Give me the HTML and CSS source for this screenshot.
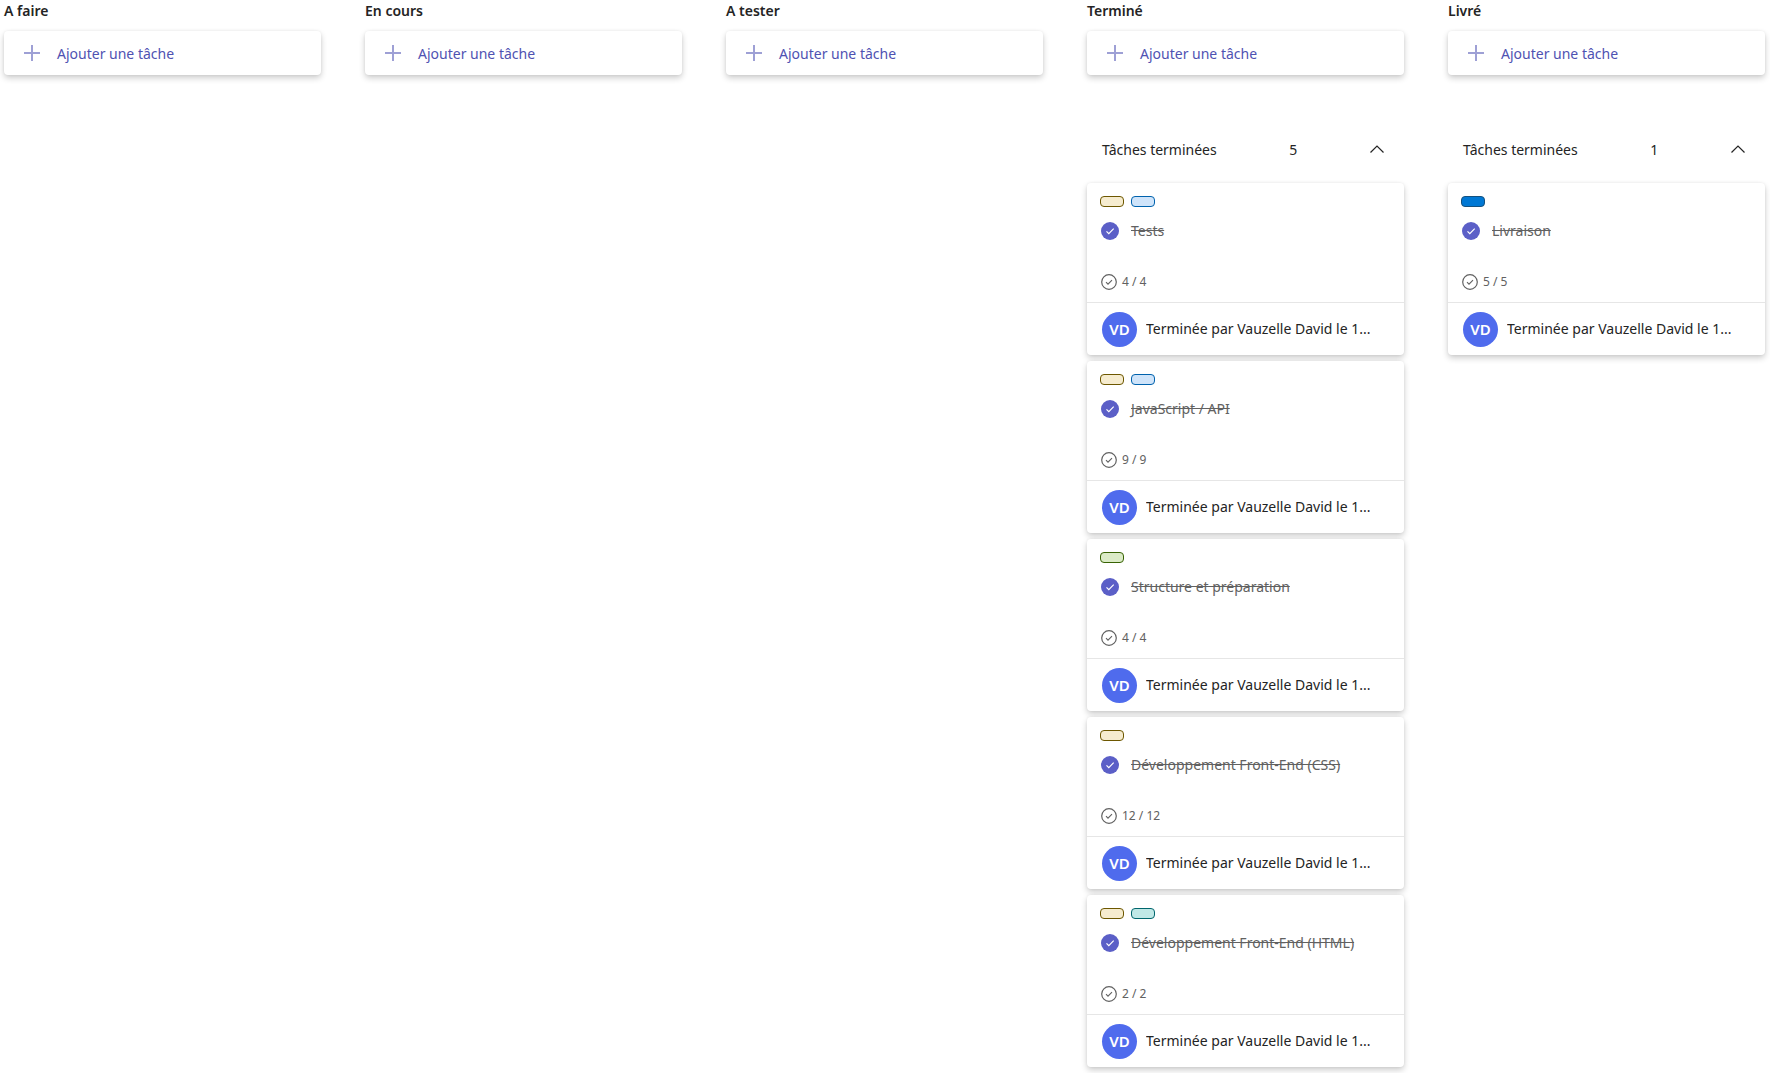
FILE: index.html
```html
<!DOCTYPE html>
<html lang="fr">
<head>
<meta charset="utf-8">
<title>Tableau des tâches</title>
<link rel="stylesheet" href="styles.css">
</head>
<body>
<svg class="sprite" aria-hidden="true">
  <symbol id="plus" viewBox="0 0 16 16"><path d="M8 0v16M0 8h16" fill="none" stroke="currentColor" stroke-width="2" stroke-opacity=".55"/></symbol>
  <symbol id="chevron" viewBox="0 0 14 8"><path d="M.5 7.5 7 1l6.500 6.500" fill="none" stroke="currentColor" stroke-width="1.200"/></symbol>
  <symbol id="tick" viewBox="0 0 18 18"><path d="m5.500 9.300 2.300 2.300 4.900-4.900" fill="none" stroke="#fff" stroke-width="1.200"/></symbol>
  <symbol id="progress" viewBox="0 0 16 16"><circle cx="8" cy="8" r="7.300" fill="none" stroke="currentColor" stroke-width="1.200"/><path d="m5 8.200 2 2 4-4" fill="none" stroke="currentColor" stroke-width="1.100"/></symbol>
</svg>
<main class="board">
  <section class="column">
    <h2 class="column-title">A faire</h2>
    <button class="add" type="button"><svg class="plus"><use href="#plus"/></svg>Ajouter une tâche</button>
  </section>
  <section class="column">
    <h2 class="column-title">En cours</h2>
    <button class="add" type="button"><svg class="plus"><use href="#plus"/></svg>Ajouter une tâche</button>
  </section>
  <section class="column">
    <h2 class="column-title">A tester</h2>
    <button class="add" type="button"><svg class="plus"><use href="#plus"/></svg>Ajouter une tâche</button>
  </section>
  <section class="column">
    <h2 class="column-title">Terminé</h2>
    <button class="add" type="button"><svg class="plus"><use href="#plus"/></svg>Ajouter une tâche</button>
    <button class="toggle" type="button" aria-expanded="true"><span>Tâches terminées</span><span>5</span><svg class="chevron"><use href="#chevron"/></svg></button>
    <div class="cards">
      <article class="card">
        <div class="card-body">
          <div class="tags"><span class="tag tag-gold"></span><span class="tag tag-sky"></span></div>
          <div class="task"><span class="check"><input type="checkbox" id="t1" checked><svg><use href="#tick"/></svg></span><label for="t1">Tests</label></div>
          <div class="progress"><svg><use href="#progress"/></svg>4 / 4</div>
        </div>
        <footer class="card-footer"><span class="avatar">VD</span><span class="done-by">Terminée par Vauzelle David le 1...</span></footer>
      </article>
      <article class="card">
        <div class="card-body">
          <div class="tags"><span class="tag tag-gold"></span><span class="tag tag-sky"></span></div>
          <div class="task"><span class="check"><input type="checkbox" id="t2" checked><svg><use href="#tick"/></svg></span><label for="t2">JavaScript / API</label></div>
          <div class="progress"><svg><use href="#progress"/></svg>9 / 9</div>
        </div>
        <footer class="card-footer"><span class="avatar">VD</span><span class="done-by">Terminée par Vauzelle David le 1...</span></footer>
      </article>
      <article class="card">
        <div class="card-body">
          <div class="tags"><span class="tag tag-green"></span></div>
          <div class="task"><span class="check"><input type="checkbox" id="t3" checked><svg><use href="#tick"/></svg></span><label for="t3">Structure et préparation</label></div>
          <div class="progress"><svg><use href="#progress"/></svg>4 / 4</div>
        </div>
        <footer class="card-footer"><span class="avatar">VD</span><span class="done-by">Terminée par Vauzelle David le 1...</span></footer>
      </article>
      <article class="card">
        <div class="card-body">
          <div class="tags"><span class="tag tag-gold"></span></div>
          <div class="task"><span class="check"><input type="checkbox" id="t4" checked><svg><use href="#tick"/></svg></span><label for="t4">Développement Front-End (CSS)</label></div>
          <div class="progress"><svg><use href="#progress"/></svg>12 / 12</div>
        </div>
        <footer class="card-footer"><span class="avatar">VD</span><span class="done-by">Terminée par Vauzelle David le 1...</span></footer>
      </article>
      <article class="card">
        <div class="card-body">
          <div class="tags"><span class="tag tag-gold"></span><span class="tag tag-teal"></span></div>
          <div class="task"><span class="check"><input type="checkbox" id="t5" checked><svg><use href="#tick"/></svg></span><label for="t5">Développement Front-End (HTML)</label></div>
          <div class="progress"><svg><use href="#progress"/></svg>2 / 2</div>
        </div>
        <footer class="card-footer"><span class="avatar">VD</span><span class="done-by">Terminée par Vauzelle David le 1...</span></footer>
      </article>
    </div>
  </section>
  <section class="column">
    <h2 class="column-title">Livré</h2>
    <button class="add" type="button"><svg class="plus"><use href="#plus"/></svg>Ajouter une tâche</button>
    <button class="toggle" type="button" aria-expanded="true"><span>Tâches terminées</span><span>1</span><svg class="chevron"><use href="#chevron"/></svg></button>
    <div class="cards">
      <article class="card">
        <div class="card-body">
          <div class="tags"><span class="tag tag-blue"></span></div>
          <div class="task"><span class="check"><input type="checkbox" id="t6" checked><svg><use href="#tick"/></svg></span><label for="t6">Livraison</label></div>
          <div class="progress"><svg><use href="#progress"/></svg>5 / 5</div>
        </div>
        <footer class="card-footer"><span class="avatar">VD</span><span class="done-by">Terminée par Vauzelle David le 1...</span></footer>
      </article>
    </div>
  </section>
</main>
</body>
</html>
```

FILE: styles.css
```css
* { box-sizing: border-box; }

body {
  margin: 0;
  background: #fff;
  color: #242424;
  font: 14px/20px "Segoe UI", "Noto Sans", "Open Sans", sans-serif;
}

svg { display: block; flex: none; }
.sprite { display: none; }

.board {
  display: grid;
  grid-template-columns: repeat(5, minmax(0, 1fr));
  gap: 44px;
  padding: 1px 5px 6px 4px;
}

.column-title {
  margin: 0 0 10px;
  font-size: 14px;
  font-weight: 600;
  line-height: 20px;
}

button {
  border: 0;
  background: none;
  color: inherit;
  font: inherit;
  cursor: pointer;
}

.add, .card {
  border-radius: 4px;
  background: #fff;
  box-shadow: 0 3px 6px rgba(0, 0, 0, .2), 0 0 3px rgba(0, 0, 0, .06);
}

.add {
  display: flex;
  align-items: center;
  gap: 17px;
  width: 100%;
  height: 44px;
  padding: 2px 20px 0;
  color: #4f52b2;
}

.plus { width: 16px; height: 16px; margin-bottom: 2px; }

.toggle {
  display: flex;
  align-items: center;
  justify-content: space-between;
  width: 100%;
  height: 44px;
  margin: 53px 0 11px;
  padding: 0 20px 0 15px;
}

.chevron { width: 14px; height: 8px; margin-bottom: 3px; }

.cards {
  display: flex;
  flex-direction: column;
  gap: 6px;
}

.card-body {
  padding: 13px 13px 11px;
  border-bottom: 1px solid #e6e6e6;
}

.tags { display: flex; gap: 7px; }

.tag {
  width: 24px;
  height: 11px;
  border: 1px solid;
  border-radius: 4px;
}

.tag-gold { background: #f6eccf; border-color: #6d5700; }
.tag-sky { background: #cfe4fa; border-color: #0062ad; }
.tag-green { background: #dbebc7; border-color: #386304; }
.tag-teal { background: #c0e8e6; border-color: #00666d; }
.tag-blue { background: #0078d4; border-color: #14517f; }

.task {
  display: flex;
  align-items: center;
  gap: 12px;
  height: 20px;
  margin: 14px 0 32px;
  padding-left: 1px;
  color: #616161;
}

.task label { text-decoration: line-through; }

.check { display: grid; flex: none; }
.check > * { grid-area: 1 / 1; width: 18px; height: 18px; margin: 0; }
.check input { appearance: none; border-radius: 50%; background: #5b5fc7; }
.check svg { z-index: 1; pointer-events: none; }

.progress {
  display: flex;
  align-items: center;
  gap: 5px;
  height: 18px;
  padding-left: 1px;
  color: #616161;
  font-size: 12px;
}

.progress svg { width: 16px; height: 16px; }

.card-footer {
  display: flex;
  align-items: center;
  gap: 9px;
  height: 52px;
  padding: 0 15px;
}

.avatar {
  flex: none;
  width: 35px;
  height: 35px;
  border-radius: 50%;
  background: #4f6bed;
  color: #fff;
  font-size: 15px;
  font-weight: 600;
  line-height: 35px;
  text-align: center;
}

.done-by {
  overflow: hidden;
  white-space: nowrap;
  text-overflow: ellipsis;
}
```
